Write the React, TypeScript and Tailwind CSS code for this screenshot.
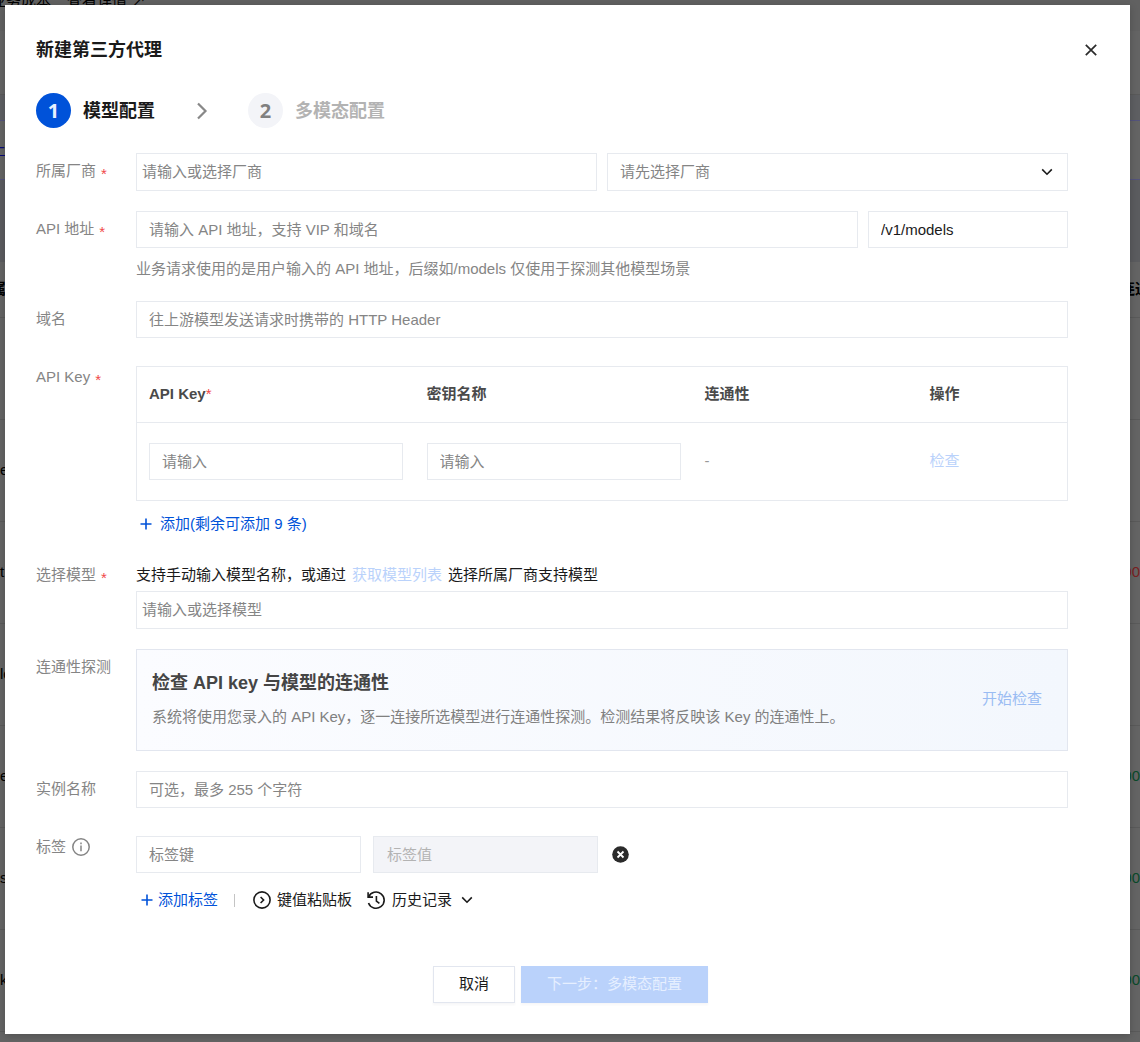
import React, { useState } from 'react';

const baseField =
  'w-full min-w-0 border border-[#e7eaef] text-[15px] text-[#1a1a1a] outline-none placeholder:opacity-100';
const fieldClass = `${baseField} h-[37px] bg-white px-3 placeholder:text-[#858585]`;
const pickerClass = `${baseField} h-[38px] bg-white px-[5px] pb-px placeholder:text-[#858585]`;
const disabledClass = `${baseField} h-[37px] bg-[#f3f4f8] px-[13px] placeholder:text-[#b3b3b3]`;

const backgroundRows = [
  { id: 1, left: '', right: '', color: 'text-[#0a4a2a]' },
  { id: 2, left: 'e', right: '', color: 'text-[#0a4a2a]' },
  { id: 3, left: 't', right: '00', color: 'text-[#7a1f1f]' },
  { id: 4, left: 'lo', right: '', color: 'text-[#0a4a2a]' },
  { id: 5, left: 'e', right: '00', color: 'text-[#0a4a2a]' },
  { id: 6, left: 's', right: '00', color: 'text-[#0a4a2a]' },
  { id: 7, left: 'k', right: '00', color: 'text-[#0a4a2a]' },
];

type LabelProps = {
  text: string;
  htmlFor?: string;
  required?: boolean;
  className?: string;
};

const Label = ({ text, htmlFor, required, className = 'pt-[7px]' }: LabelProps) => (
  <label
    htmlFor={htmlFor}
    className={`w-[100px] shrink-0 leading-[22px] text-[#858585] ${className}`}
  >
    {text}
    {required && (
      <span className="ml-[5px] align-[-3px] text-[15px] leading-none text-[#f04848]">*</span>
    )}
  </label>
);

const PlusIcon = () => (
  <svg className="h-3 w-3" viewBox="0 0 12 12" fill="none" stroke="currentColor" strokeWidth="1.6">
    <path d="M6 0.5v11M0.5 6h11" />
  </svg>
);

const ChevronDown = () => (
  <svg className="h-3 w-3" viewBox="0 0 12 12" fill="none" stroke="currentColor" strokeWidth="1.6">
    <path d="M1.2 3.4L6 8.2l4.8-4.8" />
  </svg>
);

// Instance list that stays visible around the edges of the dialog
const PageBehind = () => (
  <div className="absolute inset-0 overflow-hidden bg-[#646464] text-[15px] text-black" aria-hidden="true">
    <div className="flex h-[31px] items-start bg-[#616161]">
      <p className="-mt-[10px] -ml-[9px] flex items-center gap-4 leading-[22px]">
        <span>业务成本</span>
        <span>查看详情 ↗</span>
      </p>
    </div>
    <div className="h-[63px]" />
    <div className="h-[27px] border-y border-b-[#54547c] border-t-[#5a5a5a] bg-[#5e5f62]" />
    <div className="flex h-[59px] items-center border-b border-[#54547c] text-[#0a0a78]">
      <span className="-ml-[9px]">上</span>
    </div>
    <div className="h-[82px] bg-[#5b5c5f]" />
    <div className="flex h-[56px] items-center justify-between border-b border-[#5a5a5a] font-bold">
      <span className="-ml-[9px]">属</span>
      <span className="-mr-[25px]">连通性</span>
    </div>
    {backgroundRows.map((row) => (
      <div key={row.id} className="flex h-[102px] items-center justify-between border-b border-[#5a5a5a]">
        <span>{row.left}</span>
        <span className={row.color}>{row.right}</span>
      </div>
    ))}
  </div>
);

const Steps = () => (
  <ol className="mt-[31px] flex items-center text-[18px] font-bold">
    <li className="flex items-center gap-3" aria-current="step">
      <span className="flex h-[35px] w-[35px] items-center justify-center rounded-full bg-[#0052d9] font-['Open_Sans',sans-serif] text-[20px] text-[#e8f0ff]">
        1
      </span>
      <span className="pt-px text-[#1a1a1a]">模型配置</span>
    </li>
    <li className="mr-10 ml-[41px]" aria-hidden="true">
      <svg className="h-[18px] w-3" viewBox="0 0 12 18" fill="none" stroke="#888" strokeWidth="2.2">
        <path d="M2 1.5L9.5 9 2 16.5" />
      </svg>
    </li>
    <li className="flex items-center gap-3">
      <span className="flex h-[35px] w-[35px] items-center justify-center rounded-full bg-[#f3f4f8] font-['Open_Sans',sans-serif] text-[20px] text-[#808080]">
        2
      </span>
      <span className="pt-px text-[#b3b3b3]">多模态配置</span>
    </li>
  </ol>
);

const KeyTable = () => (
  <table className="w-full table-fixed border border-[#e7eaef] text-left">
    <colgroup>
      <col className="w-[278px]" />
      <col className="w-[278px]" />
      <col className="w-[225px]" />
      <col />
    </colgroup>
    <thead>
      <tr className="h-14 border-b border-[#e7eaef] text-[#4a4a4a]">
        <th className="px-3">
          API Key<span className="font-normal text-[#f04848]">*</span>
        </th>
        <th className="px-3">密钥名称</th>
        <th className="px-3">连通性</th>
        <th className="px-3">操作</th>
      </tr>
    </thead>
    <tbody>
      <tr className="h-[78px] text-[#999]">
        <td className="px-3">
          <input className={fieldClass} placeholder="请输入" aria-label="API Key" />
        </td>
        <td className="px-3">
          <input className={fieldClass} placeholder="请输入" aria-label="密钥名称" />
        </td>
        <td className="px-3">-</td>
        <td className="px-3">
          <button type="button" disabled className="text-[#bad2fb]">
            检查
          </button>
        </td>
      </tr>
    </tbody>
  </table>
);

const ProxyForm = () => {
  const [suffix, setSuffix] = useState('/v1/models');

  return (
    <form className="mt-[25px] mr-[31px]">
      <div className="flex">
        <Label text="所属厂商" htmlFor="vendor" required />
        <div className="grid flex-1 grid-cols-2 gap-[10px]">
          <input id="vendor" className={pickerClass} placeholder="请输入或选择厂商" />
          <div className="relative">
            <select
              aria-label="厂商选项"
              className="h-[38px] w-full appearance-none border border-[#e7eaef] bg-white px-3 text-[15px] text-[#858585] outline-none"
            >
              <option>请先选择厂商</option>
            </select>
            <span className="pointer-events-none absolute inset-y-0 right-[15px] flex items-center text-[#1a1a1a]">
              <ChevronDown />
            </span>
          </div>
        </div>
      </div>

      <div className="mt-5 flex">
        <Label text="API 地址" htmlFor="address" required />
        <div className="flex-1">
          <div className="flex gap-[10px]">
            <input id="address" className={fieldClass} placeholder="请输入 API 地址，支持 VIP 和域名" />
            <div className="w-[200px] shrink-0">
              <input
                aria-label="探测后缀"
                className={fieldClass}
                value={suffix}
                onChange={(e) => setSuffix(e.target.value)}
              />
            </div>
          </div>
          <p className="mt-[10px] leading-[22px] text-[#858585]">
            业务请求使用的是用户输入的 API 地址，后缀如/models 仅使用于探测其他模型场景
          </p>
        </div>
      </div>

      <div className="mt-[21px] flex">
        <Label text="域名" htmlFor="domain" />
        <input id="domain" className={fieldClass} placeholder="往上游模型发送请求时携带的 HTTP Header" />
      </div>

      <div className="mt-7 flex">
        <Label text="API Key" required className="pt-0" />
        <div className="flex-1">
          <KeyTable />
          <button type="button" className="mt-3 ml-1 flex items-center gap-2 leading-[22px] text-[#0052d9]">
            <PlusIcon />
            添加(剩余可添加 9 条)
          </button>
        </div>
      </div>

      <div className="mt-[29px] flex">
        <Label text="选择模型" htmlFor="model" required className="pt-0" />
        <div className="flex-1">
          <p className="leading-[22px] text-[#1a1a1a]">
            支持手动输入模型名称，或通过
            <button type="button" disabled className="mx-[6px] text-[#bad2fb]">
              获取模型列表
            </button>
            选择所属厂商支持模型
          </p>
          <input id="model" className={`mt-[5px] ${pickerClass}`} placeholder="请输入或选择模型" />
        </div>
      </div>

      <div className="mt-5 flex">
        <Label text="连通性探测" />
        <div className="flex flex-1 items-center justify-between border border-[#e2e6ef] bg-linear-to-r from-[#fbfcff] to-[#f3f7fd] pt-[21px] pr-[25px] pb-[22px] pl-[15px]">
          <div>
            <h3 className="text-[18px] leading-6 font-bold text-[#454545]">检查 API key 与模型的连通性</h3>
            <p className="mt-[11px] leading-[22px] text-[#808080]">
              系统将使用您录入的 API Key，逐一连接所选模型进行连通性探测。检测结果将反映该 Key 的连通性上。
            </p>
          </div>
          <button type="button" disabled className="shrink-0 text-[#9abcf3]">
            开始检查
          </button>
        </div>
      </div>

      <div className="mt-5 flex">
        <Label text="实例名称" htmlFor="name" />
        <input id="name" className={fieldClass} placeholder="可选，最多 255 个字符" />
      </div>

      <div className="mt-7 flex">
        <div className="flex w-[100px] shrink-0 gap-[6px] text-[#858585]">
          <label htmlFor="tag-key" className="leading-[22px]">
            标签
          </label>
          <svg className="mt-[2px] h-[18px] w-[18px]" viewBox="0 0 18 18" fill="none" stroke="currentColor" strokeWidth="1.5">
            <circle cx="9" cy="9" r="8.2" />
            <path d="M9 7.6v5.6M9 4.6v1.7" />
          </svg>
        </div>
        <div>
          <div className="flex items-center gap-3">
            <div className="w-[225px]">
              <input id="tag-key" className={fieldClass} placeholder="标签键" />
            </div>
            <div className="w-[225px]">
              <input aria-label="标签值" disabled className={disabledClass} placeholder="标签值" />
            </div>
            <button type="button" aria-label="删除标签" className="ml-[2px]">
              <svg className="h-[17px] w-[17px]" viewBox="0 0 17 17">
                <circle cx="8.5" cy="8.5" r="8.3" fill="#2b2b2b" />
                <path d="M5.5 5.5l6 6M11.5 5.5l-6 6" stroke="#fff" strokeWidth="1.8" />
              </svg>
            </button>
          </div>
          <div className="mt-4 ml-[5px] flex items-center leading-[22px] text-[#1a1a1a]">
            <button type="button" className="flex items-center gap-[5px] text-[#0052d9]">
              <PlusIcon />
              添加标签
            </button>
            <span className="ml-4 h-[13px] w-px bg-[#c4c4c4]" />
            <button type="button" className="ml-[18px] flex items-center gap-[6px]">
              <svg className="h-[18px] w-[18px]" viewBox="0 0 18 18" fill="none" stroke="currentColor" strokeWidth="1.6">
                <circle cx="9" cy="9" r="8.1" />
                <path d="M7.6 6L10.6 9l-3 3" />
              </svg>
              键值粘贴板
            </button>
            <button type="button" className="ml-[15px] flex items-center gap-[6px]">
              <svg className="h-[19px] w-[19px]" viewBox="0 0 19 19" fill="none" stroke="currentColor" strokeWidth="1.6">
                <path d="M1.1 1.2v4.9H6" />
                <path d="M1.6 6.1A8.1 8.1 0 1 1 1.5 12" />
                <path d="M9.4 5v5l3 2.4" />
              </svg>
              历史记录
              <span className="ml-[3px]">
                <ChevronDown />
              </span>
            </button>
          </div>
        </div>
      </div>
    </form>
  );
};

const App = () => {
  return (
    <div className="relative min-h-screen p-[5px] pr-[10px] pb-2 font-['Liberation_Sans','Noto_Sans_CJK_SC',sans-serif] text-[15px]">
      <PageBehind />

      <div
        role="dialog"
        aria-labelledby="dialog-title"
        className="relative bg-white px-[31px] pt-[33px] pb-[31px] shadow-[0_2px_8px_rgba(0,0,0,0.2)]"
      >
        <header className="flex items-center justify-between">
          <h2 id="dialog-title" className="text-[18px] leading-6 font-bold text-[#1a1a1a]">
            新建第三方代理
          </h2>
          <button type="button" aria-label="关闭" className="mr-[2px]">
            <svg className="h-3 w-3" viewBox="0 0 12 12" fill="none" stroke="#2b2b2b" strokeWidth="1.7">
              <path d="M0.8 0.8l10.4 10.4M11.2 0.8L0.8 11.2" />
            </svg>
          </button>
        </header>

        <Steps />
        <ProxyForm />

        <footer className="mt-[55px] flex justify-center gap-[6px] pl-[6px]">
          <button
            type="button"
            className="h-[37px] border border-[#e2e6ef] bg-white px-[25px] text-[#1a1a1a] shadow-[0_2px_2px_rgba(54,58,80,0.04)]"
          >
            取消
          </button>
          <button
            type="button"
            disabled
            className="h-[37px] bg-[#bad2fb] px-[26px] text-[#e6efff] shadow-[0_2px_2px_rgba(54,58,80,0.04)]"
          >
            下一步：多模态配置
          </button>
        </footer>
      </div>
    </div>
  );
};

export default App;
